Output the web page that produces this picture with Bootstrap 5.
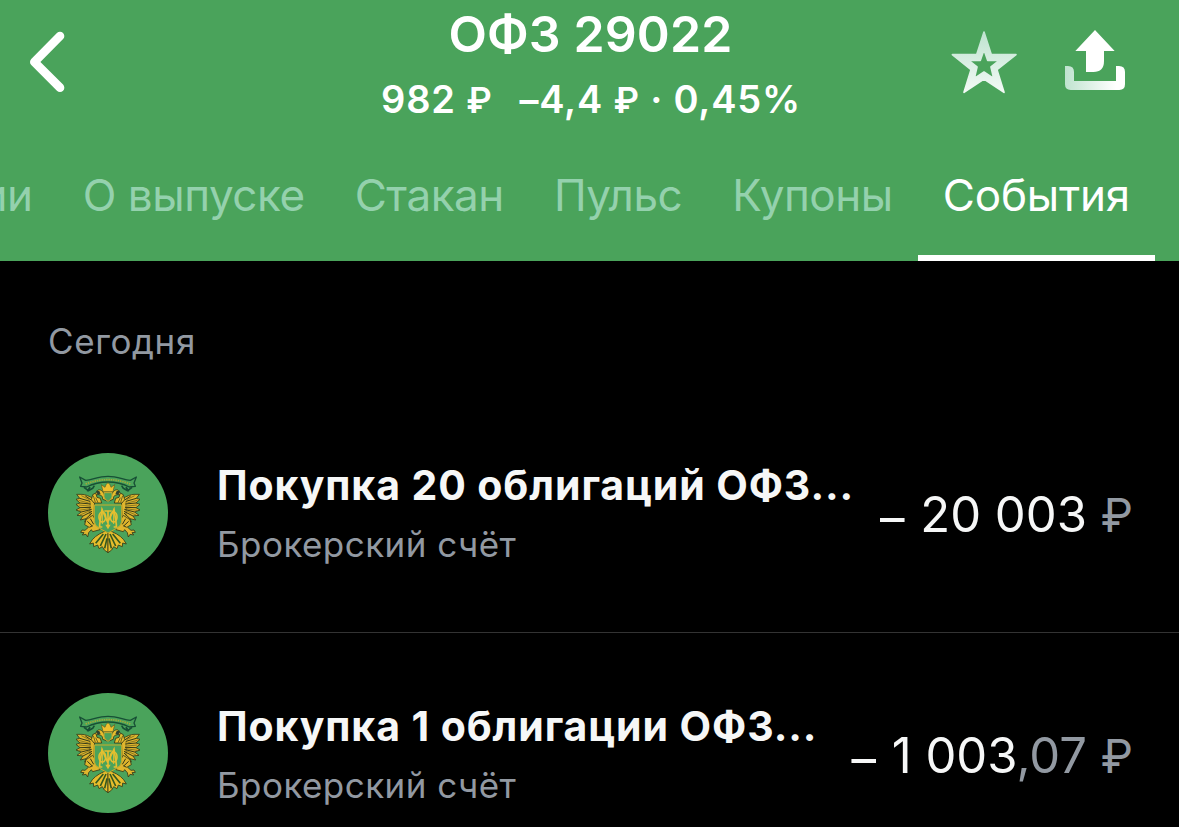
<!DOCTYPE html>
<html lang="ru">
<head>
  <meta charset="UTF-8" />
  <meta name="viewport" content="width=device-width, initial-scale=1" />
  <title>ОФЗ 29022</title>
  <link href="https://cdn.jsdelivr.net/npm/bootstrap@5.3.3/dist/css/bootstrap.min.css" rel="stylesheet" />
  <style>
    body {
      background: #000;
      color: #f6f7f7;
      font-family: Inter, "Liberation Sans", sans-serif;
    }
    .bond-header {
      background: #4aa35b;
      height: 261px;
      color: #fff;
    }
    .header-top {
      display: grid;
      grid-template-columns: 211px 1fr 209px;
      height: 139px;
    }
    .btn-back {
      padding: 30px 0 0 28px;
    }
    .header-actions {
      padding: 28px 52px 0 0;
      gap: 45px;
    }
    .bond-name {
      font-size: 50px;
      line-height: 60px;
      font-weight: 600;
      letter-spacing: 0.1px;
      padding-top: 4px;
    }
    .bond-price {
      font-size: 38px;
      line-height: 46px;
      font-weight: 600;
      letter-spacing: 0.8px;
      margin-top: 12px;
      padding-left: 1px;
      gap: 27px;
    }
    .bond-price .rub {
      font-size: 35px;
    }
    .bond-price .minus {
      vertical-align: -1px;
      line-height: 1;
    }
    .bond-tabs {
      height: 122px;
      padding-right: 24px;
    }
    .bond-tabs .nav-link {
      height: 122px;
      padding: 29px 25px 0;
      border-bottom: 6px solid transparent;
      color: #94d1ad;
      font-size: 44px;
      line-height: 54px;
      letter-spacing: -0.45px;
      white-space: nowrap;
    }
    .bond-tabs .nav-link.active {
      letter-spacing: -0.2px;
      color: #fff;
      border-color: #fff;
    }
    .day-title {
      font-size: 35px;
      line-height: 42px;
      letter-spacing: 0.6px;
      color: #9299a2;
      padding: 59px 48px 0;
      height: 132px;
    }
    .event-row {
      height: 240px;
      padding: 0 48px;
      border-bottom: 1px solid #333;
    }
    .event-row:last-child {
      height: 194px;
      border-bottom: 0;
    }
    .event-row:last-child > * {
      margin-top: 46px;
    }
    .event-logo {
      width: 120px;
      height: 120px;
      margin-right: 49px;
    }
    .event-title {
      font-size: 41px;
      line-height: 50px;
      font-weight: 700;
      letter-spacing: 0.9px;
    }
    .event-account {
      font-size: 35px;
      line-height: 42px;
      letter-spacing: 0.45px;
      margin-top: 13px;
      color: #9299a2;
    }
    .event-sum {
      font-size: 49px;
      line-height: 60px;
      padding-top: 5px;
      margin-right: -2px;
    }
    .event-sum .rub {
      font-size: 46px;
    }
    .event-sum .minus {
      vertical-align: -3px;
      line-height: 1;
      margin-right: 2px;
    }
    .dim {
      color: #9299a2;
    }
  </style>
</head>
<body class="vh-100 overflow-hidden">

  <!-- Coat of arms, shared by all rows -->
  <svg width="0" height="0" class="position-absolute">
    <defs>
      <g id="eagleHalf" stroke="#343a18" stroke-width="2.5" stroke-linejoin="round">
        <!-- Ribbon end -->
        <path fill="#4aa35b" stroke="#174f35" stroke-width="4" d="M204 94C176 94 158 104 137 106L119 96L126 114L122 124L140 126C160 116 180 111 204 111"/>
        <path fill="none" stroke="#174f35" stroke-width="5" d="M132 127l13 10 13-7 5-8M150 126l-8 13"/>
        <!-- Wing -->
        <path fill="#dfb62d" d="M164 160C150 158 146 150 126 148L110 148L119 160L108 163L120 174L108 178L120 188L108 195L124 201L111 211L129 213L121 225L138 221L134 231L162 217Z"/>
        <path fill="none" stroke-width="3" d="M119 160l31 9M120 174l32 3M120 188l33-1M124 201l31-8M129 213l27-14M138 221l18-17M136 153l18 12"/>
        <path fill="none" stroke-width="1.5" d="M124 152l24 12M116 166l30 8M116 180l32 3M116 196l34-5M120 210l30-13M150 168v44"/>
        <!-- Head -->
        <path fill="#e7bd2d" d="M202 168L188 163C188 149 182 153 176 149L160 150L170 142C171 133 181 132 187 139C194 146 191 153 203 158Z"/>
        <path fill="#2f4130" stroke="none" d="M168 137l10 1 4 10-9 2z"/>
        <path fill="#e7bd2d" d="M162 174l-8-10 4-15 9-5 4 13 10 3 4 14z"/>
        <path fill="none" stroke-width="2" d="M160 152l6 20M167 158l7 15"/>
        <!-- Leg -->
        <path fill="#dfb62d" d="M158 211l-20 13-4 15 12 7-11 10-9-1-4 7 10 1-5 7 11-2 5 8 3-13 8-9 4 6 22 -6-15-32z"/>
        <path fill="none" stroke-width="3" d="M142 229l15 14M151 221l10 17M148 247l10-5"/>
        <!-- Tail -->
        <path fill="#e7bd2d" d="M204 256C186 261 168 271 157 284L149 297L160 294L161 305L173 300L177 311L187 305L193 315L204 323Z"/>
        <path fill="none" stroke="#35591f" stroke-width="5" d="M190 267L167 295M198 267L181 303M201 280L194 310"/>
      </g>
      <g id="emblem">
        <circle cx="204" cy="204" r="180" fill="#4aa35b"/>
        <use href="#eagleHalf"/>
        <use href="#eagleHalf" transform="translate(408) scale(-1 1)"/>
        <!-- Ribbon dots, crown and breast disc -->
        <path fill="none" stroke="#a8a936" stroke-width="5" stroke-dasharray="4 3" d="M137 117Q204 91 271 117"/>
        <path fill="#efc02f" stroke="#5d5a1c" stroke-width="2" d="M189 140L184 119L195 127L198 119L204 113L210 119L213 127L224 119L219 140Z"/>
        <path fill="#4aa35b" stroke="#c6a72f" stroke-width="3" d="M192 143H216V156Q214 164 204 169Q194 164 192 156Z"/>
        <!-- Shield with monogram -->
        <path fill="#4aa35b" stroke="#c7ad2c" stroke-width="3" d="M163 180H245V230Q244 242 231 249L204 264L177 249Q164 242 163 230Z"/>
        <g fill="none" stroke="#e5bf30" stroke-width="5">
          <path d="M179 246V238L186 193L203 232L222 193L229 238V246M204 198V244M193 198H215M176 246H187M221 246H232"/>
          <ellipse cx="187" cy="216" rx="10" ry="15"/>
          <ellipse cx="221" cy="216" rx="10" ry="15"/>
          <path d="M187 195V237M221 195V237" stroke-width="3"/>
        </g>
        <path fill="#e5bf30" d="M196 239h16l-8 14z"/>
      </g>
    </defs>
  </svg>

  <header class="bond-header">
    <div class="header-top">
      <a href="#" class="btn-back" aria-label="Назад">
        <svg class="d-block" width="40" height="64" viewBox="84 90 120 192" fill="none" stroke="#fff" stroke-width="26" stroke-linecap="round" stroke-linejoin="round"><path d="M180 108L103 186L180 263"/></svg>
      </a>
      <div class="text-center">
        <div class="bond-name">ОФЗ 29022</div>
        <div class="bond-price d-flex justify-content-center">
          <span>982 <span class="rub">₽</span></span>
          <span><span class="minus">–</span>4,4 <span class="rub">₽</span> · 0,45%</span>
        </div>
      </div>
      <div class="header-actions d-flex justify-content-end">
        <svg class="flex-shrink-0" width="68" height="68" viewBox="90 54 204 204">
          <defs><linearGradient id="starFill" x2="0" y2="1"><stop stop-color="#bfe3cf"/><stop offset="1" stop-color="#f3faf6"/></linearGradient></defs>
          <path fill="url(#starFill)" stroke="url(#starFill)" stroke-width="5" stroke-linejoin="round" fill-rule="evenodd" d="M192 66L214 134H288L231 179L252 247L192 207L132 247L153 179L97 134H170Z M192 119L181 151H146L171 171L163 205L192 186L221 205L213 171L238 151H203Z"/>
        </svg>
        <svg class="flex-shrink-0" width="64" height="64" viewBox="429 54 192 192">
          <defs><linearGradient id="trayFill"><stop stop-color="#bfe3cf"/><stop offset=".85" stop-color="#fff"/></linearGradient></defs>
          <path fill="#fff" d="M525 60L584 123H552V153Q552 186 520 186H498V123H466Z"/>
          <path fill="url(#trayFill)" d="M435 168H444Q462 168 462 186V213H588V168H597Q615 168 615 186V223Q615 240 598 240H452Q435 240 435 223Z"/>
        </svg>
      </div>
    </div>
    <nav class="bond-tabs nav flex-nowrap justify-content-end">
      <a class="nav-link" href="#">Облигации</a>
      <a class="nav-link" href="#">О выпуске</a>
      <a class="nav-link" href="#">Стакан</a>
      <a class="nav-link" href="#">Пульс</a>
      <a class="nav-link" href="#">Купоны</a>
      <a class="nav-link active" href="#">События</a>
    </nav>
  </header>

  <main>
    <div class="day-title">Сегодня</div>
    <div class="event-row d-flex align-items-center">
      <svg class="event-logo flex-shrink-0" viewBox="24 24 360 360"><use href="#emblem"/></svg>
      <div class="flex-grow-1 text-nowrap">
        <div class="event-title">Покупка 20 облигаций ОФЗ...</div>
        <div class="event-account">Брокерский счёт</div>
      </div>
      <div class="event-sum text-nowrap"><span class="minus">–</span> 20 003 <span class="dim rub">₽</span></div>
    </div>
    <div class="event-row d-flex align-items-center">
      <svg class="event-logo flex-shrink-0" viewBox="24 24 360 360"><use href="#emblem"/></svg>
      <div class="flex-grow-1 text-nowrap">
        <div class="event-title">Покупка 1 облигации ОФЗ...</div>
        <div class="event-account">Брокерский счёт</div>
      </div>
      <div class="event-sum text-nowrap"><span class="minus">–</span> 1 003<span class="dim">,07 <span class="rub">₽</span></span></div>
    </div>
  </main>

  <script src="https://cdn.jsdelivr.net/npm/bootstrap@5.3.3/dist/js/bootstrap.bundle.min.js"></script>
</body>
</html>
